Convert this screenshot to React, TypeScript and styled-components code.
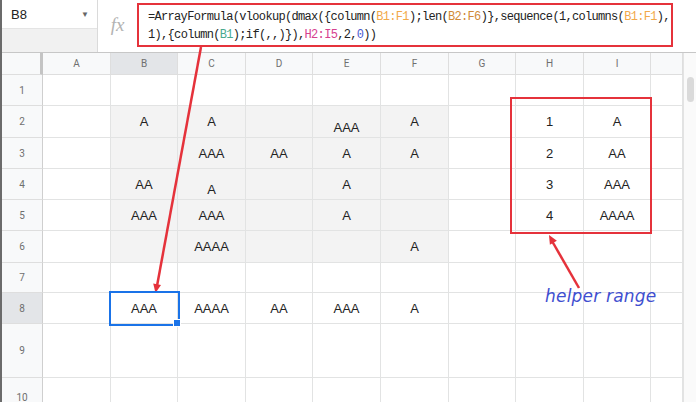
import React from 'react'
import styled, { createGlobalStyle, css } from 'styled-components'

const GlobalStyle = createGlobalStyle`
  body {
    margin: 0;
    background: #ffffff;
    font-family: 'Liberation Sans', Arial, sans-serif;
  }
`

const RED = '#e5323b'
const BLUE = '#1a73e8'
const GRID = '#e2e3e3'

const COLS = ['A', 'B', 'C', 'D', 'E', 'F', 'G', 'H', 'I', '']
const COL_WIDTHS = [41, 68, 67, 68, 67, 68, 68, 67, 68, 67, 32]
const ROW_HEIGHTS = [22, 31, 32, 31, 31, 31, 32, 30, 31, 54, 40]

const cells: Record<string, string> = {
  B2: 'A', C2: 'A', E2: 'AAA', F2: 'A', H2: '1', I2: 'A',
  C3: 'AAA', D3: 'AA', E3: 'A', F3: 'A', H3: '2', I3: 'AA',
  B4: 'AA', C4: 'A', E4: 'A', H4: '3', I4: 'AAA',
  B5: 'AAA', C5: 'AAA', E5: 'A', H5: '4', I5: 'AAAA',
  C6: 'AAAA', F6: 'A',
  B8: 'AAA', C8: 'AAAA', D8: 'AA', E8: 'AAA', F8: 'A',
}
// cells that sit at the bottom of the row
const lowCells = ['E2', 'C4']

// frame of the whole window
const Frame = styled.div`
  position: relative;
  width: 696px;
  height: 402px;
  overflow: hidden;
  border-left: 2px solid #6b6b6b;
  box-sizing: border-box;
  background: #fff;
`

const FormulaBar = styled.div`
  display: flex;
  height: 52px;
  border-bottom: 1px solid #c7c7c7;
`

const NameColumn = styled.div`
  width: 95px;
  display: flex;
  flex-direction: column;
  border-right: 1px solid #dadada;
  background: #f1f1f1;
`

const NameBox = styled.div`
  height: 28px;
  background: #fff;
  display: flex;
  align-items: center;
  justify-content: space-between;
  padding: 0 8px 0 9px;
  font-size: 13px;
  color: #222;
  border-bottom: 1px solid #e4e4e4;
`

const Caret = styled.span`
  font-size: 8px;
  color: #666;
`

const FxCell = styled.div`
  width: 39px;
  display: flex;
  align-items: center;
  justify-content: center;
  font-family: 'Liberation Serif', serif;
  font-style: italic;
  font-size: 19px;
  color: #b3b3b3;
  padding-bottom: 2px;
`

const FormulaBox = styled.div`
  width: 536px;
  box-sizing: border-box;
  margin: 3px 0 5px 0;
  border: 2px solid ${RED};
  padding: 3px 0 0 9px;
  font-family: 'Liberation Mono', monospace;
  font-size: 12px;
  letter-spacing: -0.68px;
  line-height: 18px;
  color: #222;
  white-space: pre;
`

const Ref = styled.span<{ tone: string }>`
  color: ${({ tone }) => tone};
`

const SheetArea = styled.div`
  display: flex;
`

const Grid = styled.div`
  display: grid;
  grid-template-columns: ${COL_WIDTHS.map((w) => `${w}px`).join(' ')};
  grid-template-rows: ${ROW_HEIGHTS.map((h) => `${h}px`).join(' ')};
`

const headerBase = css`
  box-sizing: border-box;
  display: flex;
  align-items: center;
  justify-content: center;
  font-family: Roboto, 'Liberation Sans', sans-serif;
  font-size: 10px;
  color: #6f6f6f;
  border-right: 1px solid #dedede;
  border-bottom: 1px solid #dedede;
`

const Corner = styled.div`
  ${headerBase};
  background: #f8f9fa;
  border-right: 3px solid #c4c4c4;
`

const ColHeader = styled.div<{ active?: boolean }>`
  ${headerBase};
  background: ${({ active }) => (active ? '#e3e5e8' : '#f8f9fa')};
`

const RowHeader = styled.div<{ active?: boolean }>`
  ${headerBase};
  background: ${({ active }) => (active ? '#e3e5e8' : '#f8f9fa')};
  border-right: 1px solid #cfcfcf;
`

const Cell = styled.div<{ shaded?: boolean; low?: boolean; selected?: boolean }>`
  position: relative;
  box-sizing: border-box;
  display: flex;
  justify-content: center;
  align-items: ${({ low }) => (low ? 'flex-end' : 'center')};
  padding-bottom: ${({ low }) => (low ? '2px' : '0')};
  font-size: 13px;
  color: #222;
  background: ${({ shaded }) => (shaded ? '#f3f3f3' : '#fff')};
  border-right: 1px solid ${GRID};
  border-bottom: 1px solid ${GRID};
  ${({ selected }) =>
    selected &&
    css`
      box-shadow: 0 0 0 2px ${BLUE};
      z-index: 2;
    `}
`

const FillHandle = styled.span`
  position: absolute;
  right: -4px;
  bottom: -4px;
  width: 6px;
  height: 6px;
  background: ${BLUE};
  border: 1px solid #fff;
`

const Scrollbar = styled.div`
  width: 13px;
  height: 349px;
  box-sizing: border-box;
  border-left: 1px solid #e3e3e3;
  background: #fafafa;
  padding: 24px 2px 0 3px;
`

const Thumb = styled.div`
  height: 25px;
  border-radius: 4px;
  background: #dadada;
`

// annotations drawn over the sheet
const HelperBox = styled.div`
  position: absolute;
  left: 508px;
  top: 97px;
  width: 142px;
  height: 137px;
  box-sizing: border-box;
  border: 2px solid ${RED};
  pointer-events: none;
`

const HelperLabel = styled.div`
  position: absolute;
  left: 543px;
  top: 286px;
  font-family: 'DejaVu Sans', sans-serif;
  font-style: italic;
  font-size: 17px;
  letter-spacing: 0.2px;
  color: #3f4fd0;
`

const Overlay = styled.svg`
  position: absolute;
  left: -2px;
  top: 0;
  pointer-events: none;
`

const isShaded = (col: string, row: number) => col !== '' && 'BCDEF'.includes(col) && row >= 2 && row <= 6

const App: React.FC = () => {
  const rows = Array.from({ length: 10 }, (_, i) => i + 1)
  return (
    <Frame>
      <GlobalStyle />
      <FormulaBar>
        <NameColumn>
          <NameBox>
            B8
            <Caret>▼</Caret>
          </NameBox>
        </NameColumn>
        <FxCell>fx</FxCell>
        <FormulaBox>
          =ArrayFormula(vlookup(dmax({'{'}column(<Ref tone="#f2a94a">B1:F1</Ref>);len(
          <Ref tone="#d08a37">B2:F6</Ref>){'}'},sequence(1,columns(<Ref tone="#f2a94a">B1:F1</Ref>),
          {'\n'}1),{'{'}column(<Ref tone="#49a98e">B1</Ref>);if(,,){'}'}),<Ref tone="#d6418e">H2:I5</Ref>,2,
          <Ref tone="#4a5bd0">0</Ref>))
        </FormulaBox>
      </FormulaBar>
      <SheetArea>
        <Grid>
          <Corner />
          {COLS.map((c, i) => (
            <ColHeader key={`h${i}`} active={c === 'B'}>
              {c}
            </ColHeader>
          ))}
          {rows.map((r) => (
            <React.Fragment key={r}>
              <RowHeader active={r === 8}>{r}</RowHeader>
              {COLS.map((c, i) => {
                const id = `${c}${r}`
                const selected = id === 'B8'
                return (
                  <Cell key={`${r}-${i}`} shaded={isShaded(c, r)} low={lowCells.includes(id)} selected={selected}>
                    {c ? cells[id] : ''}
                    {selected && <FillHandle />}
                  </Cell>
                )
              })}
            </React.Fragment>
          ))}
        </Grid>
        <Scrollbar>
          <Thumb />
        </Scrollbar>
      </SheetArea>

      <HelperBox />
      <HelperLabel>helper range</HelperLabel>
      <Overlay width={696} height={402} viewBox="0 0 696 402">
        <line x1={201} y1={47} x2={157} y2={286} stroke={RED} strokeWidth={2.5} />
        <polygon points="155.5,293 161,284.9 153.2,283.5" fill={RED} />
        <line x1={579} y1={288} x2={552} y2={241} stroke={RED} strokeWidth={2.5} />
        <polygon points="549,235 556.9,240.8 549.9,244.8" fill={RED} />
      </Overlay>
    </Frame>
  )
}

export default App
